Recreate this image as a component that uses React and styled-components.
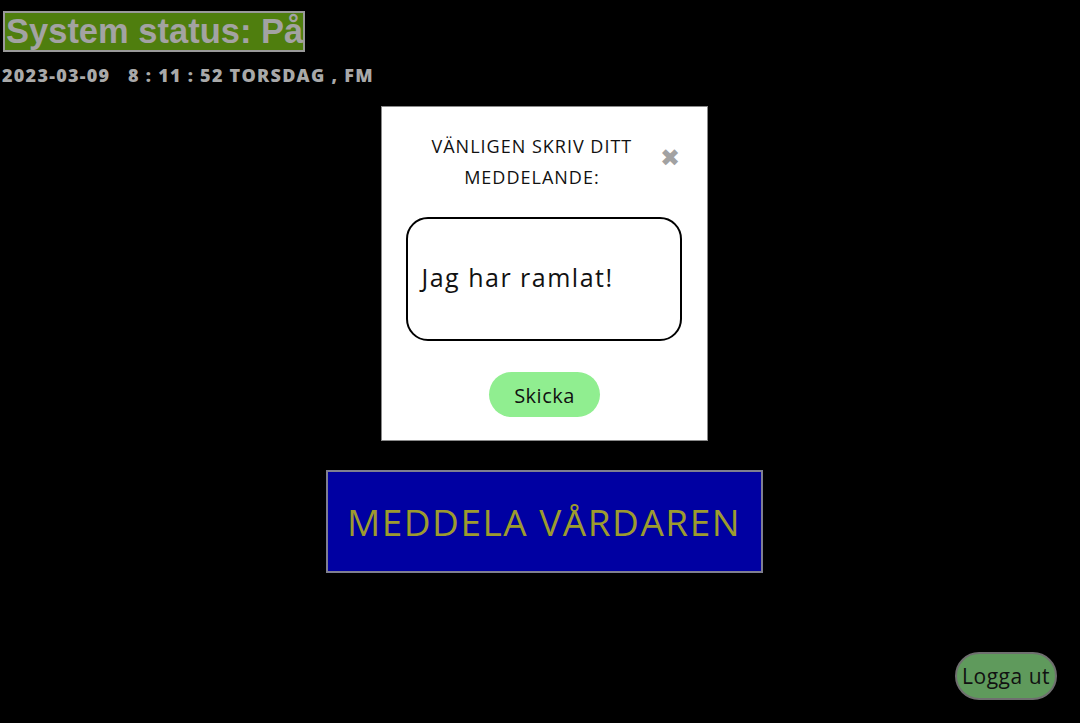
import React, { useState } from "react";
import styled, { createGlobalStyle } from "styled-components";

const GlobalStyle = createGlobalStyle`
  html, body {
    margin: 0;
    padding: 0;
    background: #000;
  }
  body {
    font-family: "Open Sans", "Liberation Sans", sans-serif;
  }
`;

const Page = styled.div`
  display: flex;
  flex-direction: column;
  height: 723px;
  box-sizing: border-box;
  padding: 11px 23px 23px 2px;
  position: relative;
  overflow: hidden;
`;

const Status = styled.div`
  align-self: flex-start;
  margin-left: 1px;
  background: #4f7e0e;
  border: 2px solid #9a9a9a;
  color: #a3a3a3;
  font-family: "Liberation Sans", Arial, sans-serif;
  font-weight: bold;
  font-size: 34.5px;
  line-height: 37px;
  padding: 0 0 0 1px;
`;

const Clock = styled.div`
  margin-top: 12px;
  color: #a9a9a9;
  font-weight: 800;
  font-size: 18px;
  line-height: 22px;
  letter-spacing: 1.25px;
  white-space: pre;
`;

const Main = styled.main`
  flex: 1;
  display: flex;
  align-items: center;
  justify-content: center;
  padding-left: 29px;
  padding-top: 304px;
`;

const BigButton = styled.button`
  width: 437px;
  height: 103px;
  background: #0000a2;
  border: 2px solid #7f7f90;
  color: #9d9b2e;
  font-family: "Open Sans", sans-serif;
  font-size: 37px;
  letter-spacing: 1.5px;
  cursor: pointer;
`;

const Footer = styled.div`
  display: flex;
  justify-content: flex-end;
`;

const Pill = styled.button`
  border-radius: 999px;
  font-family: "Open Sans", sans-serif;
  color: #111;
  cursor: pointer;
  background: ${(p) => p.$bg};
  border: ${(p) => (p.$outlined ? "2px solid #6f6f6f" : "none")};
  padding: ${(p) => p.$pad};
  font-size: ${(p) => p.$size}px;
  letter-spacing: 0.5px;
`;

const Modal = styled.div`
  position: absolute;
  left: 381px;
  top: 106px;
  width: 327px;
  height: 335px;
  box-sizing: border-box;
  background: #fff;
  border: 1px solid #8a8a8a;
  display: flex;
  flex-direction: column;
  align-items: center;
  padding-top: 24px;
`;

const Head = styled.div`
  display: flex;
  align-items: flex-start;
  justify-content: flex-end;
  width: 100%;
  box-sizing: border-box;
  padding-right: 27px;
  gap: 13px;
`;

const Title = styled.h2`
  margin: 0;
  font-weight: 400;
  font-size: 18px;
  line-height: 31px;
  letter-spacing: 1px;
  color: #111;
  text-align: center;
  width: 230px;
`;

const Close = styled.span`
  margin-top: 15px;
  color: #a2a2a2;
  font-size: 24px;
  line-height: 1;
  font-family: "DejaVu Sans", sans-serif;
  font-weight: bold;
`;

const Message = styled.div`
  margin-top: 24px;
  margin-right: 2px;
  width: 276px;
  height: 124px;
  box-sizing: border-box;
  border: 2px solid #000;
  border-radius: 22px;
  display: flex;
  align-items: center;
  padding: 0 0 4px 14px;
  font-size: 25px;
  letter-spacing: 1.5px;
  color: #111;
`;

const SendRow = styled.div`
  margin-top: 31px;
`;

export default function App() {
  const [text] = useState("Jag har ramlat!");
  return (
    <>
      <GlobalStyle />
      <Page>
        <Status>System status: På</Status>
        <Clock>{"2023-03-09   8 : 11 : 52 TORSDAG , FM"}</Clock>
        <Main>
          <BigButton>MEDDELA VÅRDAREN</BigButton>
        </Main>
        <Footer>
          <Pill $bg="#5f9a5c" $outlined $pad="8px 5px" $size={21}>
            Logga ut
          </Pill>
        </Footer>
        <Modal>
          <Head>
            <Title>VÄNLIGEN SKRIV DITT MEDDELANDE:</Title>
            <Close>✖</Close>
          </Head>
          <Message>{text}</Message>
          <SendRow>
            <Pill $bg="#90ee90" $pad="10px 25px 8px" $size={20}>
              Skicka
            </Pill>
          </SendRow>
        </Modal>
      </Page>
    </>
  );
}
